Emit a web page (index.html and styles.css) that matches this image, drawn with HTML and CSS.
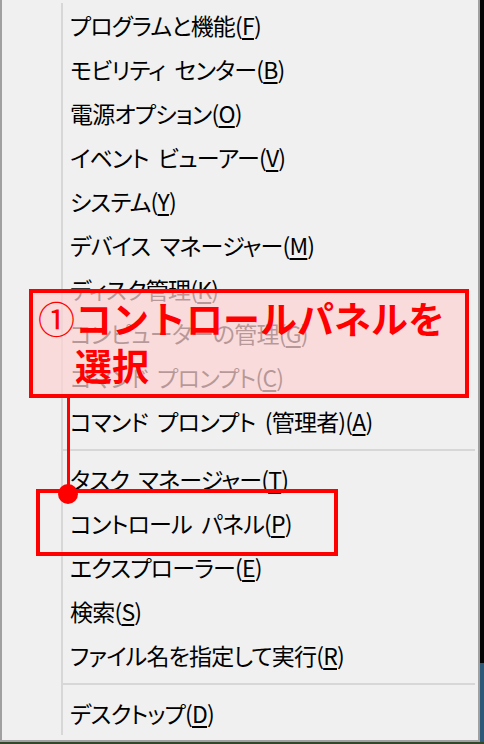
FILE: index.html
```html
<!DOCTYPE html>
<html lang="ja">
<head>
<meta charset="utf-8">
<title>クイックリンク メニュー</title>
<link rel="stylesheet" href="styles.css">
</head>
<body>
<div class="menu">
  <div class="gutter"></div>
  <ul class="items">
    <li class="item">プログラムと機能(<u>F</u>)</li>
    <li class="item">モビリティ センター(<u>B</u>)</li>
    <li class="item">電源オプション(<u>O</u>)</li>
    <li class="item">イベント ビューアー(<u>V</u>)</li>
    <li class="item">システム(<u>Y</u>)</li>
    <li class="item">デバイス マネージャー(<u>M</u>)</li>
    <li class="item">ディスク管理(<u>K</u>)</li>
    <li class="item">コンピューターの管理(<u>G</u>)</li>
    <li class="item">コマンド プロンプト(<u>C</u>)</li>
    <li class="item">コマンド プロンプト (管理者)(<u>A</u>)</li>
    <li class="sep"></li>
    <li class="item">タスク マネージャー(<u>T</u>)</li>
    <li class="item">コントロール パネル(<u>P</u>)</li>
    <li class="item">エクスプローラー(<u>E</u>)</li>
    <li class="item">検索(<u>S</u>)</li>
    <li class="item">ファイル名を指定して実行(<u>R</u>)</li>
    <li class="sep"></li>
    <li class="item">デスクトップ(<u>D</u>)</li>
  </ul>
</div>

<div class="note">
  <span class="note-num">①</span>
  <span class="note-text">コントロールパネルを<br>選択</span>
</div>
<div class="connector"></div>
<div class="highlight"></div>
<div class="dot"></div>
</body>
</html>
```

FILE: styles.css
```css
html, body {
  margin: 0;
  padding: 0;
}

body {
  width: 484px;
  height: 744px;
  overflow: hidden;
  position: relative;
  background:
    linear-gradient(to top, #34462a 0, #34462a 2px, transparent 2px),
    linear-gradient(to bottom, #050505 0, #050505 663px, #2d5878 663px);
  font-family: "Noto Sans CJK JP", "Noto Sans", sans-serif;
}

.menu {
  box-sizing: border-box;
  width: 480px;
  height: 742px;
  background: #f0f0f0;
  border-left: 2px solid #a0a0a0;
  border-right: 2px solid #a0a0a0;
  border-bottom: 2px solid #a0a0a0;
  padding: 3px 0 5px 0;
  display: flex;
}

.gutter {
  width: 59px;
  flex: none;
}

.items {
  list-style: none;
  margin: 0 3px 0 0;
  padding: 0;
  flex: 1;
  border-left: 2px solid #d7d7d7;
}

.item {
  height: 44px;
  line-height: 44px;
  padding-left: 7px;
  font-size: 23px;
  letter-spacing: -0.8px;
  word-spacing: 5px;
  color: #000;
  white-space: nowrap;
  font-feature-settings: "palt";
}

.item u {
  text-decoration-thickness: 2px;
  text-underline-offset: 3px;
}

.sep {
  height: 2px;
  margin: 6px 0;
  background: #d7d7d7;
}

.note {
  position: absolute;
  left: 29px;
  top: 289px;
  width: 440px;
  height: 109px;
  box-sizing: border-box;
  border: 4px solid #ff0000;
  background: rgba(252, 210, 210, 0.72);
  padding: 2px 0 0 5px;
  display: flex;
  color: #ff0000;
  font-size: 37px;
  line-height: 47px;
}

.note-num {
  font-weight: 400;
}

.note-text {
  font-weight: 700;
}

.connector {
  position: absolute;
  left: 67px;
  top: 398px;
  width: 3px;
  height: 96px;
  background: #ff0000;
}

.highlight {
  position: absolute;
  left: 36px;
  top: 489px;
  width: 302px;
  height: 67px;
  box-sizing: border-box;
  border: 4px solid #ff0000;
}

.dot {
  position: absolute;
  left: 58px;
  top: 484px;
  width: 20px;
  height: 20px;
  border-radius: 50%;
  background: #ff0000;
}
```
